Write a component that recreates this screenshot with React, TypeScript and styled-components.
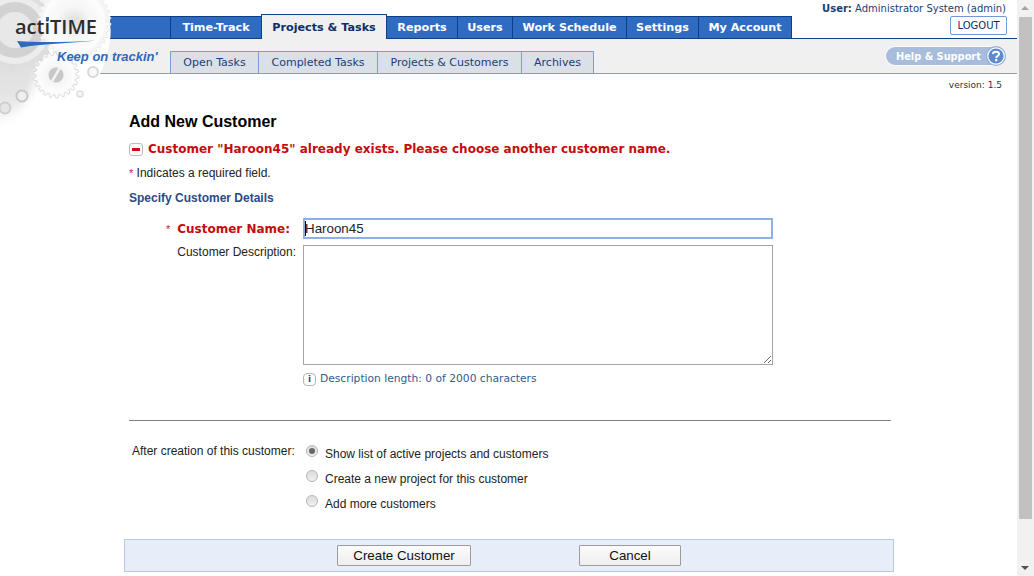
import styled, { createGlobalStyle } from "styled-components";

const GlobalStyle = createGlobalStyle`
  html, body {
    margin: 0;
    padding: 0;
    height: 100%;
    overflow: hidden;
    background: #fff;
  }
  #root {
    height: 100%;
  }
`;

const verdana = `"DejaVu Sans", Verdana, sans-serif`;
const arial = `"Liberation Sans", Arial, sans-serif`;

const mainTabs = [
  { label: "Time-Track", width: 92 },
  { label: "Projects & Tasks", width: 126, active: true },
  { label: "Reports", width: 72 },
  { label: "Users", width: 56 },
  { label: "Work Schedule", width: 115 },
  { label: "Settings", width: 73 },
  { label: "My Account", width: 94 },
];

const subTabs = [
  { label: "Open Tasks", width: 89 },
  { label: "Completed Tasks", width: 120 },
  { label: "Projects & Customers", width: 145 },
  { label: "Archives", width: 73 },
];

const radios = [
  { label: "Show list of active projects and customers", checked: true },
  { label: "Create a new project for this customer" },
  { label: "Add more customers" },
];

// builds a toothed wheel outline for the logo artwork
function gearPath(cx: number, cy: number, outer: number, inner: number, teeth: number) {
  const pts: string[] = [];
  const step = (Math.PI * 2) / teeth;
  for (let i = 0; i < teeth; i++) {
    const a = i * step;
    const corners = [
      [inner, a],
      [outer, a + step * 0.2],
      [outer, a + step * 0.5],
      [inner, a + step * 0.7],
    ];
    corners.forEach(([r, t]) => {
      pts.push(`${(cx + r * Math.cos(t)).toFixed(1)} ${(cy + r * Math.sin(t)).toFixed(1)}`);
    });
  }
  return `M${pts.join("L")}Z`;
}

function LogoArt() {
  return (
    <LogoSvg viewBox="0 0 130 130" width="130" height="130">
      <defs>
        <radialGradient id="wheel" cx="50%" cy="50%" r="50%">
          <stop offset="0%" stopColor="#dcdcdc" />
          <stop offset="50%" stopColor="#f6f6f6" />
          <stop offset="100%" stopColor="#fdfdfd" />
        </radialGradient>
        <linearGradient id="wash" x1="0" y1="0" x2="0" y2="1">
          <stop offset="0%" stopColor="#d8d8d8" />
          <stop offset="75%" stopColor="#e4e4e4" />
          <stop offset="100%" stopColor="#ffffff" />
        </linearGradient>
        <filter id="soft" x="-30%" y="-30%" width="160%" height="160%">
          <feGaussianBlur stdDeviation="4" />
        </filter>
      </defs>
      <path
        d="M0 0H100C110 14 112 30 110 40C108 55 104 65 100 74C90 90 60 108 16 128H0Z"
        fill="#fff"
      />
      <path d="M-10 0H42C46 30 42 62 34 84C26 104 16 118 -10 128Z" fill="url(#wash)" filter="url(#soft)" />
      <path d={gearPath(15, 30, 42, 38, 24)} fill="#dedede" />
      <circle cx="15" cy="30" r="34" fill="#ececec" />
      <circle cx="15" cy="30" r="28" fill="#d2d2d2" />
      <circle cx="15" cy="30" r="18" fill="#e8e8e8" />
      <path d={gearPath(74, 22, 37, 34, 36)} fill="#f6f6f6" stroke="#e2e2e2" strokeWidth="0.6" />
      <circle cx="74" cy="22" r="31" fill="url(#wheel)" />
      <path d={gearPath(56, 75, 23, 20, 22)} fill="#fafafa" stroke="#d2d2d2" strokeWidth="0.8" />
      <circle cx="56" cy="75" r="18" fill="url(#wheel)" />
      <circle cx="56" cy="75" r="7.5" fill="#c8c8c8" />
      <rect x="54.5" y="67" width="2.5" height="16" fill="#f3f3f3" transform="rotate(30 56 75)" />
      <circle cx="22" cy="96" r="5.5" fill="#efefef" stroke="#c6c6c6" strokeWidth="2" />
      <circle cx="5" cy="108" r="5.5" fill="#e6e6e6" stroke="#cfcfcf" strokeWidth="2" />
      <circle cx="93" cy="72" r="5" fill="#f8f8f8" stroke="#d8d8d8" strokeWidth="2" />
      <circle cx="80" cy="94" r="3" fill="#f6f6f6" stroke="#dedede" strokeWidth="1.5" />
      <path d="M17 41C40 43 70 42 96 40.5C70 43 40 44 21 47.5Z" fill="#2f68bf" />
    </LogoSvg>
  );
}

function HelpIcon() {
  return (
    <HelpCircle>
      <svg viewBox="0 0 20 20" width="20" height="20">
        <circle cx="10" cy="10" r="10" fill="#8fabd6" />
        <circle cx="10" cy="10" r="8.8" fill="#fff" />
        <circle cx="10" cy="10" r="7.6" fill="#5d8ad0" />
        <path
          d="M7 8C7 5 13 5 13 8C13 10 10.2 10 10.2 12"
          fill="none"
          stroke="#fff"
          strokeWidth="2"
        />
        <rect x="9.1" y="13" width="2.2" height="2.2" fill="#fff" />
      </svg>
    </HelpCircle>
  );
}

export default function App() {
  return (
    <>
      <GlobalStyle />
      <Root>
        <Page>
          <Logo>
            <LogoArt />
            <LogoText>actiTIME</LogoText>
            <LogoDot />
            <Slogan>Keep on trackin'</Slogan>
          </Logo>

          <TopBar>
            <Band />
            {mainTabs.map((t) => (
              <MainTab key={t.label} $active={t.active} $width={t.width}>
                {t.label}
              </MainTab>
            ))}
            <UserBox>
              <UserLine>
                <b>User:</b> Administrator System (admin)
              </UserLine>
              <LogoutButton>LOGOUT</LogoutButton>
            </UserBox>
          </TopBar>

          <SubBar>
            {subTabs.map((t) => (
              <SubTab key={t.label} $width={t.width}>
                {t.label}
              </SubTab>
            ))}
            <HelpPill>
              Help &amp; Support
              <HelpIcon />
            </HelpPill>
          </SubBar>

          <Version>version: 1.5</Version>

          <Content>
            <Title>Add New Customer</Title>
            <ErrorRow>
              <ErrorIcon>
                <ErrorDash />
              </ErrorIcon>
              Customer "Haroon45" already exists. Please choose another customer name.
            </ErrorRow>
            <Required>
              <Star>*</Star> Indicates a required field.
            </Required>
            <SectionTitle>Specify Customer Details</SectionTitle>

            <FormGrid>
              <NameLabel>
                <NameStar>*</NameStar>
                <span>Customer Name:</span>
              </NameLabel>
              <InputWrap>
                <NameInput defaultValue="Haroon45" readOnly />
                <Caret />
              </InputWrap>
              <DescLabel>Customer Description:</DescLabel>
              <DescArea />
              <span />
              <DescHint>
                <InfoIcon>i</InfoIcon>
                Description length: 0 of 2000 characters
              </DescHint>
            </FormGrid>

            <Divider />

            <AfterRow>
              <AfterLabel>After creation of this customer:</AfterLabel>
              <RadioList>
                {radios.map((r) => (
                  <RadioRow key={r.label}>
                    <Radio type="radio" name="after" defaultChecked={r.checked} />
                    <span>{r.label}</span>
                  </RadioRow>
                ))}
              </RadioList>
            </AfterRow>
          </Content>

          <Footer>
            <FooterButton $width={134}>Create Customer</FooterButton>
            <FooterButton $width={102}>Cancel</FooterButton>
          </Footer>
        </Page>

        <ScrollTrack>
          <ScrollArrow $up />
          <ScrollThumb />
          <ScrollArrow />
        </ScrollTrack>
      </Root>
    </>
  );
}

const Root = styled.div`
  display: flex;
  height: 576px;
  width: 1034px;
  overflow: hidden;
`;

const Page = styled.div`
  position: relative;
  width: 1017px;
  flex-shrink: 0;
`;

const Logo = styled.div`
  position: absolute;
  top: 0;
  left: 0;
  width: 160px;
  height: 130px;
  z-index: 3;
`;

const LogoSvg = styled.svg`
  display: block;
`;

const LogoText = styled.div`
  position: absolute;
  top: 13px;
  left: 15px;
  font: 600 20px/28px "Open Sans", sans-serif;
  color: #2d2d2d;
`;

const LogoDot = styled.span`
  position: absolute;
  left: 46px;
  top: 17px;
  width: 3px;
  height: 3px;
  background: #2f68bf;
`;

const Slogan = styled.div`
  position: absolute;
  top: 49px;
  left: 57px;
  font: italic bold 13px/16px ${arial};
  color: #2f68bf;
  white-space: nowrap;
`;

const TopBar = styled.div`
  display: flex;
  align-items: flex-end;
  height: 38px;
  padding-left: 110px;
  border-bottom: 1px solid #0d3f85;
`;

const Band = styled.div`
  width: 60px;
  height: 22px;
  background: #2f6cc1;
  border-top: 1px solid #0d3f85;
  box-sizing: border-box;
`;

const MainTab = styled.div<{ $active?: boolean; $width: number }>`
  box-sizing: border-box;
  width: ${(p) => p.$width}px;
  display: flex;
  align-items: center;
  justify-content: center;
  font: bold 11.2px ${verdana};
  height: ${(p) => (p.$active ? 25 : 22)}px;
  margin-bottom: ${(p) => (p.$active ? -1 : 0)}px;
  margin-right: -1px;
  color: ${(p) => (p.$active ? "#0d2f66" : "#fff")};
  background: ${(p) => (p.$active ? "#f0f0f0" : "#2f6cc1")};
  border: 1px solid #0d3f85;
  border-bottom: none;
  position: relative;
  z-index: ${(p) => (p.$active ? 1 : 0)};
`;

const UserBox = styled.div`
  margin-left: auto;
  margin-right: 10px;
  align-self: flex-start;
  display: flex;
  flex-direction: column;
  align-items: flex-end;
  padding-top: 2px;
`;

const UserLine = styled.div`
  font: 10px/13px ${verdana};
  color: #1d3d75;
  white-space: nowrap;
  margin-right: 1px;
`;

const LogoutButton = styled.div`
  box-sizing: border-box;
  width: 57px;
  height: 19px;
  margin-top: 1px;
  display: flex;
  align-items: center;
  justify-content: center;
  font: 10px ${verdana};
  color: #0d2f66;
  background: #fff;
  border: 1px solid #6f9ad6;
  border-radius: 2px;
`;

const SubBar = styled.div`
  box-sizing: border-box;
  display: flex;
  align-items: flex-end;
  height: 35px;
  padding-left: 170px;
  background: #f0f0f0;
  border-bottom: 1px solid #7b9fd0;
`;

const SubTab = styled.div<{ $width: number }>`
  box-sizing: border-box;
  width: ${(p) => p.$width}px;
  height: 22px;
  margin-right: -1px;
  display: flex;
  align-items: center;
  justify-content: center;
  font: 11px ${verdana};
  color: #1d3d75;
  background: #d9e0e8;
  border: 1px solid #7b9fd0;
  border-bottom: none;
`;

const HelpPill = styled.div`
  box-sizing: border-box;
  align-self: flex-start;
  margin: 8px 12px 0 auto;
  width: 119px;
  height: 18px;
  display: flex;
  align-items: center;
  padding-left: 10px;
  position: relative;
  font: bold 9.8px ${verdana};
  color: #fff;
  background: #a7bddb;
  border-radius: 9px;
  box-shadow: 0 0 0 1px #fbfbfb;
  white-space: nowrap;
`;

const HelpCircle = styled.span`
  position: absolute;
  right: -1px;
  top: -1px;
  display: block;
  line-height: 0;
`;

const Version = styled.div`
  height: 12px;
  margin-top: 5px;
  padding-right: 15px;
  text-align: right;
  font: 9px/12px ${verdana};
  color: #333;
`;

const Content = styled.div`
  width: 762px;
  margin-left: 129px;
`;

const Title = styled.h1`
  margin: 21px 0 0;
  font: bold 16px/20px ${arial};
  color: #000;
`;

const ErrorRow = styled.div`
  display: flex;
  align-items: center;
  gap: 5px;
  margin-top: 9px;
  font: bold 12px/16px ${verdana};
  color: #c40c0c;
  white-space: nowrap;
`;

const ErrorIcon = styled.span`
  box-sizing: border-box;
  width: 14px;
  height: 13px;
  display: flex;
  align-items: center;
  justify-content: center;
  background: #fff;
  border: 1px solid #bbb;
  border-radius: 3px;
`;

const ErrorDash = styled.span`
  width: 8px;
  height: 3px;
  background: #d01010;
`;

const Required = styled.div`
  margin-top: 9px;
  font: 12px/14px ${arial};
  color: #222;
`;

const Star = styled.span`
  color: #d02020;
  font-size: 11px;
`;

const NameStar = styled(Star)`
  font-weight: normal;
  font-family: ${arial};
`;

const SectionTitle = styled.div`
  margin: 11px 0 0 0;
  font: bold 12px/14px ${arial};
  color: #2c4a86;
`;

const FormGrid = styled.div`
  display: grid;
  grid-template-columns: 174px 470px;
  row-gap: 6px;
  margin-top: 13px;
`;

const NameLabel = styled.div`
  display: flex;
  justify-content: flex-end;
  align-items: center;
  gap: 7px;
  padding-right: 13px;
  font: bold 12px ${verdana};
  color: #c40c0c;
  white-space: nowrap;
`;

const DescLabel = styled.div`
  padding-right: 7px;
  text-align: right;
  font: 12px/14px ${arial};
  color: #222;
  white-space: nowrap;
`;

const InputWrap = styled.div`
  position: relative;
  height: 21px;
`;

const NameInput = styled.input`
  box-sizing: border-box;
  display: block;
  width: 100%;
  height: 21px;
  padding: 0;
  font: 13.33px ${arial};
  color: #222;
  border: 2px solid #8fb0e6;
  outline: none;
`;

const Caret = styled.span`
  position: absolute;
  left: 2px;
  top: 3px;
  width: 1px;
  height: 15px;
  background: #000;
`;

const DescArea = styled.textarea`
  box-sizing: border-box;
  display: block;
  width: 100%;
  height: 120px;
  border: 1px solid #a5a5a5;
  outline: none;
  margin: 0;
`;

const DescHint = styled.div`
  display: flex;
  align-items: center;
  gap: 4px;
  margin-top: 1px;
  font: 10.7px/14px ${verdana};
  color: #2f5c8f;
  white-space: nowrap;
`;

const InfoIcon = styled.span`
  box-sizing: border-box;
  width: 13px;
  height: 13px;
  display: flex;
  align-items: center;
  justify-content: center;
  font: bold 9px ${verdana};
  color: #2c4a96;
  border: 1px solid #b5b5b5;
  border-radius: 4px;
`;

const Divider = styled.hr`
  margin: 34px 0 0;
  border: none;
  border-top: 1px solid #808080;
`;

const AfterRow = styled.div`
  display: flex;
  margin-top: 23px;
`;

const AfterLabel = styled.div`
  width: 174px;
  margin-left: 3px;
  font: 12px/14px ${arial};
  color: #222;
  white-space: nowrap;
`;

const RadioList = styled.div`
  display: flex;
  flex-direction: column;
  gap: 11px;
`;

const RadioRow = styled.label`
  display: flex;
  align-items: center;
  gap: 7px;
  height: 14px;
  font: 12px/14px ${arial};
  color: #222;
  white-space: nowrap;
  & > span {
    position: relative;
    top: 3px;
  }
`;

const Radio = styled.input`
  appearance: none;
  box-sizing: border-box;
  width: 12px;
  height: 12px;
  margin: 0;
  border-radius: 50%;
  border: 1px solid #b5b5b5;
  background: linear-gradient(#dcdcdc, #f0f0f0);
  position: relative;
  &:checked::after {
    content: "";
    position: absolute;
    left: 2px;
    top: 2px;
    width: 6px;
    height: 6px;
    border-radius: 50%;
    background: #666;
  }
`;

const Footer = styled.div`
  box-sizing: border-box;
  position: absolute;
  left: 124px;
  top: 539px;
  width: 770px;
  height: 33px;
  display: flex;
  align-items: center;
  gap: 108px;
  padding-left: 212px;
  background: #e7eef9;
  border: 1px solid #b9c9e0;
`;

const FooterButton = styled.button<{ $width: number }>`
  box-sizing: border-box;
  width: ${(p) => p.$width}px;
  height: 21px;
  padding: 0;
  font: 13.33px ${arial};
  color: #111;
  background: linear-gradient(#fbfbfb, #eeeeee);
  border: 1px solid #9c9c9c;
  border-radius: 1px;
`;

const ScrollTrack = styled.div`
  width: 17px;
  height: 576px;
  background: #f1f1f1;
  display: flex;
  flex-direction: column;
  align-items: center;
`;

const ScrollThumb = styled.div`
  width: 13px;
  height: 502px;
  background: #c1c1c1;
`;

const ScrollArrow = styled.div<{ $up?: boolean }>`
  flex: ${(p) => (p.$up ? "0 0 17px" : "1")};
  width: 17px;
  position: relative;
  &::after {
    content: "";
    position: absolute;
    left: 4px;
    ${(p) => (p.$up ? "top: 6px;" : "bottom: 6px;")}
    border-left: 4px solid transparent;
    border-right: 4px solid transparent;
    ${(p) => (p.$up ? "border-bottom: 4px solid #a3a3a3;" : "border-top: 4px solid #505050;")}
  }
`;
